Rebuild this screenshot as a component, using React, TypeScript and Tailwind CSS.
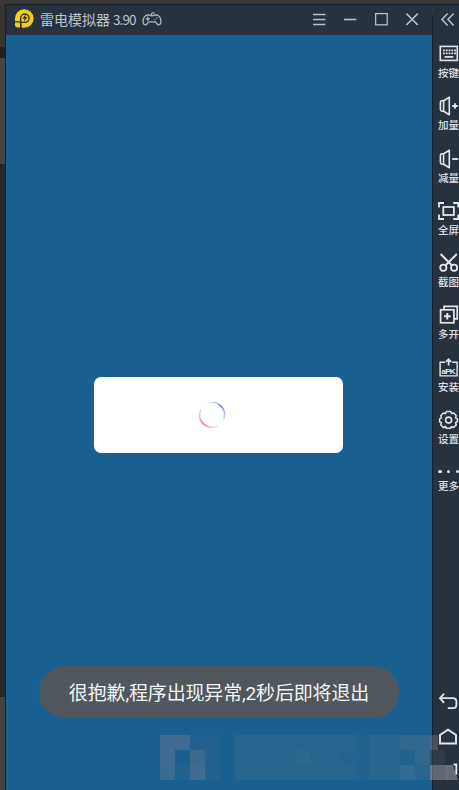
import type { ReactNode } from "react";

function Icon({ children, className = "h-5" }: { children: ReactNode; className?: string }) {
  return (
    <svg
      viewBox="0 0 22 20"
      preserveAspectRatio="xMidYMid meet"
      className={`w-[22px] shrink-0 ${className}`}
      fill="none"
      stroke="#e2e6ed"
      strokeWidth="1.4"
    >
      {children}
    </svg>
  );
}

const speaker = (
  <path
    d="M5.6 4.8H4Q2.4 4.8 2.4 6.4v7.2q0 1.6 1.6 1.6h1.6M5.6 4.8L11.3 1.2v17.6L5.6 15.2z"
    strokeLinejoin="round"
    strokeWidth="1.6"
  />
);

const tools: { label: string; icon: ReactNode }[] = [
  {
    label: "按键",
    icon: (
      <>
        <rect x="2.3" y="2.4" width="17" height="14" strokeWidth="1.6" />
        <path d="M5 6.4h13M5 9.4h13" strokeDasharray="1.8 1" strokeWidth="1.7" />
        <path d="M6.5 12.9h8.8" strokeWidth="1.7" />
      </>
    ),
  },
  {
    label: "加量",
    icon: (
      <>
        {speaker}
        <path d="M14.2 10h5.6M17 7.2v5.6" strokeWidth="1.8" />
      </>
    ),
  },
  {
    label: "减量",
    icon: (
      <>
        {speaker}
        <path d="M14.2 10h6" strokeWidth="1.8" />
      </>
    ),
  },
  {
    label: "全屏",
    icon: (
      <g strokeWidth="1.8">
        <rect x="5.3" y="6" width="10.6" height="8" />
        <path d="M1 6.5V2h5M15.2 2h5v4.5M20.2 13.5V18h-5M6 18H1v-4.5" />
      </g>
    ),
  },
  {
    label: "截图",
    icon: (
      <>
        <path d="M2.6 1l11.7 11.7M18.8 1L7.1 12.7" strokeWidth="2" />
        <circle cx="5.3" cy="14.8" r="3.1" strokeWidth="1.8" />
        <circle cx="16.1" cy="14.8" r="3.1" strokeWidth="1.8" />
      </>
    ),
  },
  {
    label: "多开",
    icon: (
      <>
        <path d="M6 4.6V1.4h13.2v12.4H16" strokeWidth="1.7" />
        <rect x="2.6" y="4.8" width="13.3" height="13" strokeWidth="1.7" />
        <path d="M6 11.3h6.6M9.3 8v6.6" strokeWidth="2" />
      </>
    ),
  },
  {
    label: "安装",
    icon: (
      <>
        <path d="M7 4.3H2.1v13.6h17V4.3h-4.9" strokeWidth="1.4" />
        <path d="M10.6 7.4V1.4M7.9 4l2.7-2.7L13.3 4" strokeWidth="1.7" />
        <text
          x="10.6"
          y="15.6"
          textAnchor="middle"
          textLength="14"
          className="fill-[#e2e6ed] stroke-none font-['Liberation_Sans',sans-serif] text-[8px] font-bold"
        >
          aPK
        </text>
      </>
    ),
  },
  {
    label: "设置",
    icon: (
      <>
        <path
          d="M8.4 1.5h4.4l.8 2.1 2.1-.6 2.6 2.7-.8 2.1 1.9 1v3l-1.9.8.8 2.3-2.9 2.6-2-.9-.8 1.7H8.4l-.9-1.8-2.2 1-2.6-2.7.8-2.2-1.9-.8V8.8l1.9-1-.8-2.1L5.4 3l2.2.5z"
          strokeLinejoin="round"
          strokeWidth="1.5"
        />
        <circle cx="10.6" cy="10.1" r="3" strokeWidth="1.6" />
      </>
    ),
  },
];

/* x, y, width, height, fill, opacity */
const mosaic: [number, number, number, number, string, number][] = [
  [160, 735, 30, 15, "#7a808c", 0.38],
  [160, 750, 15, 15, "#7a808c", 0.38],
  [160, 765, 15, 15, "#6a8490", 0.36],
  [175, 765, 15, 15, "#607890", 0.16],
  [190, 750, 15, 15, "#76808e", 0.34],
  [190, 765, 15, 15, "#76808e", 0.4],
  [205, 735, 15, 45, "#607890", 0.16],
  [190, 735, 15, 15, "#4668a0", 0.2],
  [235, 735, 120, 45, "#5d7b8e", 0.22],
  [295, 750, 15, 15, "#5d7b8e", 0.1],
  [340, 750, 15, 15, "#125c96", 0.12],
  [355, 735, 15, 45, "#5d7b8e", 0.14],
  [370, 735, 30, 45, "#5d7b8e", 0.22],
  [400, 735, 30, 15, "#777d8a", 0.28],
  [400, 750, 15, 15, "#5d7b8e", 0.14],
  [415, 750, 15, 15, "#777d8a", 0.28],
  [400, 765, 15, 15, "#6e8b98", 0.25],
  [415, 765, 15, 15, "#5d7b8e", 0.22],
  [430, 735, 8, 15, "#777a82", 0.42],
  [430, 765, 15, 15, "#a3a3a8", 0.45],
];

function TitleBar() {
  return (
    <header className="flex h-[30px] shrink-0 items-center bg-[#28323f] pb-0.5 pl-2">
      <svg viewBox="0 0 20 20" className="h-5 w-5">
        <path d="M1 10A9.3 9.3 0 1 1 10.3 18.8H7.5v-4.3H1z" fill="#f7cb16" />
        <path d="M1 13.5h5v4.9H3.5Q1 18.4 1 16z" fill="#f7cb16" />
        <path d="M.5 12.8H7M6.7 19V9a4.2 4.2 0 1 1 4.2 4.4H6.7" fill="none" stroke="#28323f" strokeWidth="1.3" />
        <path d="M12 5L8.4 9.6h2.2l-.9 3.2 3.8-4.6h-2.2z" fill="#28323f" />
      </svg>
      <span className="ml-1.5 flex w-[98px] whitespace-nowrap font-['Noto_Sans_CJK_SC',sans-serif] text-[14px] leading-5 text-[#bdc3cc]">
        雷电模拟器
        <span className="ml-[3px] text-[13.5px] tracking-[-0.9px]">3.90</span>
      </span>
      <svg viewBox="0 0 20 16" className="ml-1 h-4 w-5" fill="none" stroke="#aeb5bf" strokeWidth="1.3" strokeLinecap="round">
        <path d="M9.5 4V2.8q0-1 1.5-1h1M6 4h1.6q2.4 1.6 4.8 0H14c3 0 4.8 3.2 5 6.3.1 3.6-2.7 4.6-4.2 2.3L13.5 10.8h-7l-1.3 1.8C3.7 14.9.9 13.9 1 10.3 1.2 7.2 3 4 6 4z" />
        <path d="M4.2 7.8h3.2M5.8 6.2v3.2M12.8 8.6h.1M14.9 7h.1" />
      </svg>
      <div className="ml-auto mr-[13px] flex items-center gap-[17px]">
        <svg viewBox="0 0 14 14" className="h-3.5 w-3.5" fill="none" stroke="#b6bdc6" strokeWidth="1.6">
          <path d="M1 2.5h12.5M1 7.5h12.5M1 12.5h12.5" />
        </svg>
        <svg viewBox="0 0 14 14" className="h-3.5 w-3.5" stroke="#b6bdc6" strokeWidth="1.6">
          <path d="M1 7.5h12.4" />
        </svg>
        <svg viewBox="0 0 14 14" className="h-3.5 w-3.5" fill="none" stroke="#b6bdc6" strokeWidth="1.3">
          <rect x="1.6" y="1.6" width="11.6" height="11.2" />
        </svg>
        <svg viewBox="0 0 14 14" className="h-3.5 w-3.5" stroke="#b6bdc6" strokeWidth="1.6">
          <path d="M1.4 1.6l11.4 11.4M12.8 1.6L1.4 13" />
        </svg>
      </div>
    </header>
  );
}

function ToolBar() {
  const label =
    "mt-[3px] h-3 w-[22px] whitespace-nowrap font-['Noto_Sans_CJK_SC',sans-serif] text-[10.5px] font-medium leading-3 text-[#dce0e7]";
  return (
    <aside className="flex w-[26px] shrink-0 flex-col overflow-hidden bg-[#28323f] pl-[5px]">
      <Icon className="mt-1 h-5">
        <path d="M9.6 4.5L4 10.5l5.6 6M15.6 4.5l-5.6 6 5.6 6" stroke="#b6bdc6" strokeWidth="1.6" />
      </Icon>
      <nav className="mt-[15px] flex flex-col">
        {tools.map((tool) => (
          <div key={tool.label} className="flex h-[52.3px] flex-col">
            <Icon>{tool.icon}</Icon>
            <span className={label}>{tool.label}</span>
          </div>
        ))}
        <div className="mt-[3px] flex flex-col">
          <div className="flex h-3 w-[21px] items-center justify-between">
            <i className="h-[3.5px] w-[3.5px] rounded-full bg-[#e2e6ed]" />
            <i className="h-[3.5px] w-[3.5px] rounded-full bg-[#e2e6ed]" />
            <i className="h-[3.5px] w-[3.5px] rounded-full bg-[#e2e6ed]" />
          </div>
          <span className={label}>更多</span>
        </div>
      </nav>
      <div className="mb-2 mt-auto flex flex-col gap-[15px]">
        <Icon>
          <path d="M6.1 1.6L2 6.2l4.1 4.6M2.4 6.2h12.4q3.6 0 3.6 3.5v3.1q0 3.4-3 3.4H9.8" strokeWidth="1.8" />
        </Icon>
        <Icon>
          <path d="M2 16.5V8L10 2.6 18 8v8.5z" strokeWidth="1.9" />
        </Icon>
        <Icon>
          <path d="M15.5 2.5h2.8v10.3" strokeWidth="1.8" />
        </Icon>
      </div>
    </aside>
  );
}

export default function App() {
  return (
    <div className="relative flex h-[790px] w-[459px] flex-col overflow-hidden bg-[#393837]">
      <div className="h-1 shrink-0 bg-[#3b3736]" />
      <div className="flex min-h-0 flex-1">
        <div className="flex w-[5px] shrink-0 flex-col">
          <div className="h-[43px] bg-[#393432]" />
          <div className="h-[11px] bg-[#212123]" />
          <div className="h-[106px] bg-[#444444]" />
          <div className="h-[533px] bg-[#222a2c]" />
          <div className="flex-1 bg-[#444342]" />
        </div>
        <div className="flex min-w-0 flex-1 border-l border-t border-[#17202b]">
          <div className="flex w-[426px] shrink-0 flex-col">
            <TitleBar />
            <main className="flex flex-1 flex-col items-center bg-[#1a6091]">
              <div className="mr-px mt-[341.5px] flex h-[76px] w-[249px] items-center justify-center rounded-[7px] bg-white pr-[13px]">
                <svg viewBox="0 0 28 28" className="h-7 w-7" fill="none" strokeWidth="1.7">
                  <defs>
                    <linearGradient id="blueArc" x1="0" y1="0" x2="1" y2="1">
                      <stop offset="0" stopColor="#8795ec" stopOpacity="0.1" />
                      <stop offset="0.5" stopColor="#7186ed" />
                      <stop offset="1" stopColor="#8795ec" stopOpacity="0.35" />
                    </linearGradient>
                    <linearGradient id="redArc" x1="0" y1="0" x2="1" y2="1">
                      <stop offset="0" stopColor="#ef8d98" stopOpacity="0.25" />
                      <stop offset="0.5" stopColor="#ed7588" />
                      <stop offset="1" stopColor="#f2b6a6" stopOpacity="0.3" />
                    </linearGradient>
                  </defs>
                  <path d="M9.5 2.4A12.2 12.2 0 0 1 25.7 18" stroke="url(#blueArc)" />
                  <path d="M3.2 8A12.2 12.2 0 0 0 19.5 24.9" stroke="url(#redArc)" />
                </svg>
              </div>
              <div className="mt-[213.5px] flex h-[52px] w-[360px] items-center justify-center rounded-[26px] bg-[#50575d] pt-1">
                <span className="whitespace-nowrap font-['Roboto','Noto_Sans_CJK_SC',sans-serif] text-[19px] leading-6 tracking-[-0.16px] text-[#f3f4f5]">
                  很抱歉,程序出现异常,2秒后即将退出
                </span>
              </div>
            </main>
          </div>
          <div className="mt-2.5 w-px shrink-0 bg-[#17202b]" />
          <ToolBar />
        </div>
      </div>
      <svg viewBox="0 0 459 790" className="pointer-events-none absolute inset-0 h-full w-full" shapeRendering="crispEdges">
        {mosaic.map(([x, y, width, height, fill, opacity]) => (
          <rect key={`${x}-${y}`} x={x} y={y} width={width} height={height} fill={fill} opacity={opacity} />
        ))}
        <path d="M430 750h15v15h-15z" fill="#394451" opacity="0.5" />
        <path d="M445 765h8l5 15h-13z" fill="#b5b5ba" opacity="0.45" />
      </svg>
    </div>
  );
}
